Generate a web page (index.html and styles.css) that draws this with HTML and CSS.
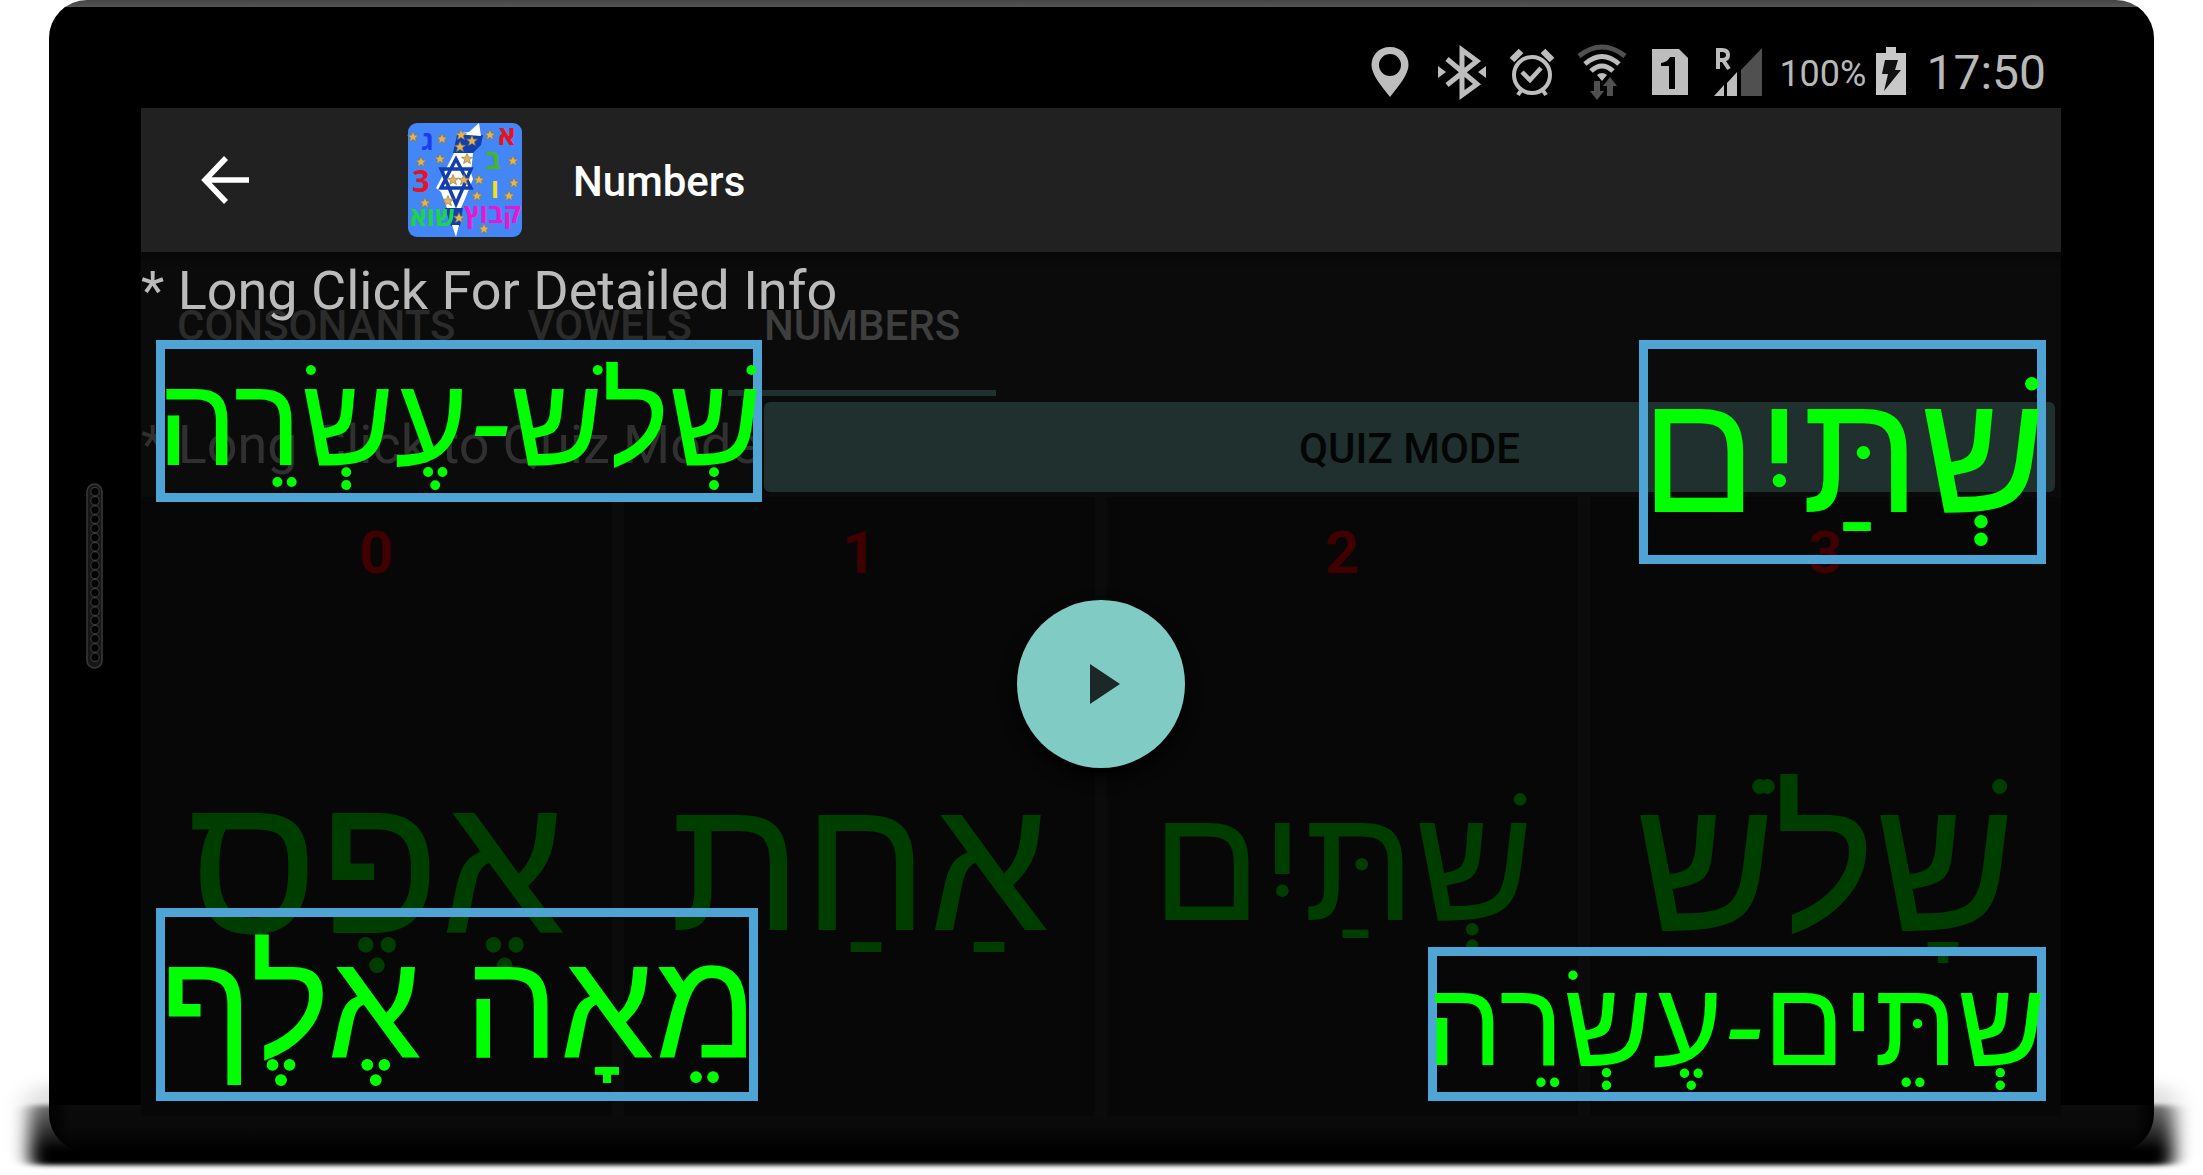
FILE: index.html
```html
<!DOCTYPE html>
<html lang="en">
<head>
<meta charset="utf-8">
<title>Numbers</title>
<link rel="stylesheet" href="styles.css">
</head>
<body>
<div class="stage">
  <svg class="floor-shadow" aria-hidden="true">
    <defs>
      <linearGradient id="fade" x1="0" y1="0" x2="0" y2="1"><stop offset="0" stop-opacity=".5"/><stop offset=".75" stop-opacity="1"/></linearGradient>
      <filter id="soft" x="-5%" y="-50%" width="110%" height="200%"><feGaussianBlur stdDeviation="9 2"/></filter>
      <filter id="faint" x="-5%" y="-50%" width="110%" height="200%"><feGaussianBlur stdDeviation="12 7"/></filter>
    </defs>
    <rect class="haze" filter="url(#faint)"/>
    <rect class="core" fill="url(#fade)" filter="url(#soft)"/>
  </svg>
  <div class="device">
    <svg class="speaker" viewBox="0 0 17 186" aria-hidden="true">
      <defs>
        <pattern id="holes" width="17" height="9.2" patternUnits="userSpaceOnUse" y="4">
          <circle cx="9" cy="4.6" r="4.2" fill="#000" stroke="#3c3c3c" stroke-width="1"/>
        </pattern>
      </defs>
      <rect x="1" y="1" width="15" height="184" rx="7.5" fill="#161616" stroke="#3a3a3a" stroke-width="1.5"/>
      <rect x="1" y="4" width="15" height="175" fill="url(#holes)"/>
    </svg>

    <div class="status-bar">
      <svg class="status-icon" width="48" height="54" viewBox="0 0 48 54" aria-label="Location"><path fill="#bdbdbd" fill-rule="evenodd" d="M24 2C13 2 5.500 10 5.500 20c0 9 9 20 18.500 32C33.500 40 42.500 29 42.500 20 42.500 10 35 2 24 2zm0 7a11 11 0 1 1 0 22 11 11 0 0 1 0-22z"/></svg>
      <svg class="status-icon" width="48" height="54" viewBox="0 0 48 54" aria-label="Bluetooth"><path fill="none" stroke="#bdbdbd" stroke-width="5" d="M9 14l30 25-15 11V5l15 11L9 40"/><path fill="#bdbdbd" d="M0 21l8 6-8 6zM48 21l-8 6 8 6z"/></svg>
      <svg class="status-icon" width="44" height="54" viewBox="0 0 44 54" aria-label="Alarm"><g fill="none" stroke="#bdbdbd"><circle cx="22" cy="30" r="18" stroke-width="4"/><path stroke-width="4.500" d="M12 27l8 8 11-12"/><path stroke-width="6.500" d="M2 15l9-9M42 15l-9-9"/><path stroke-width="4" d="M12 44l-4 6M32 44l4 6"/></g></svg>
      <svg class="status-icon" width="48" height="54" viewBox="0 0 48 54" aria-label="Wi-Fi"><g fill="none" stroke-width="5"><path stroke="#505050" d="M1 11Q24-7 47 11"/><path stroke="#bdbdbd" d="M7 19Q24 4 41 19M13 26Q24 16 35 26"/></g><path fill="#bdbdbd" d="M19 30q5-4 10 0l-5 6z"/><path fill="#505050" d="M16 36h6v10h4l-7 9-7-9h4zM29 51h6V41h4l-7-9-7 9h4z"/></svg>
      <svg class="status-icon" width="40" height="54" viewBox="0 0 40 54" aria-label="SIM 1"><path fill="#bdbdbd" d="M2 4h27l9 9v37H2z"/><path d="M11 18q7-1 9-6h5v32h-6V21h-8z"/></svg>
      <svg class="status-icon" width="48" height="54" viewBox="0 0 48 54" aria-label="Signal, roaming"><path fill="#505050" d="M27 51V25L48 3v48z"/><path fill="#bdbdbd" d="M0 51l10-11v11zM13 51V38l10-11v24z"/><path fill="none" stroke="#bdbdbd" stroke-width="4" d="M4 24V5h4q6 0 6 5t-6 5H4M9 15l6 9"/></svg>
      <span class="battery-level">100%</span>
      <svg class="battery-icon" width="30" height="54" viewBox="0 0 30 54" aria-label="Charging"><path fill="#c8c8c8" d="M0 8h10V2h10v6h10v42H0z"/><path fill="#111" d="M9 15h13l-3 10h6L8 46l4-17H6z"/></svg>
      <span class="clock">17:50</span>
    </div>

    <div class="screen">
      <header class="app-bar">
        <button class="back" type="button" aria-label="Back">
          <svg width="48" height="48" viewBox="0 0 48 48"><path fill="none" stroke="#fff" stroke-width="5.500" d="M25 2L4 24l21 22M4 24h44"/></svg>
        </button>
        <svg class="logo" viewBox="0 0 116 116" aria-hidden="true">
          <defs><path id="st" d="M0-5.500L1.600-1.800 5.500-1.700 2.400.8 3.500 4.600 0 2.400-3.500 4.600-2.400.8-5.500-1.700-1.600-1.800z" fill="#e0b558" stroke="#8a7142" stroke-width=".6"/></defs>
          <rect x="1" y="1" width="114" height="114" rx="9" fill="#4386f7"/>
          <path fill="#123faf" d="M50 13h26l-2 10-8 8H46zM38 86h18l-3 18h-9z"/>
          <path fill="#fff" d="M52 11l10-1 10-9 2 13-13-1zM47 31h19l-2 20 2 6-8 20-4 9H40l-6-16-5-4 8-15zM45 103h7l-3 12z"/>
          <g fill="none" stroke="#123faf" stroke-width="3.500"><path d="M49 37l15 29H34zM49 82L34 47h30z"/></g>
          <use href="#st" x="6" y="15"/><use href="#st" x="35" y="17"/><use href="#st" x="54" y="13"/><use href="#st" x="65" y="19"/><use href="#st" x="53" y="25"/><use href="#st" x="83" y="13"/><use href="#st" x="14" y="40"/><use href="#st" x="33" y="37"/><use href="#st" x="60" y="37"/><use href="#st" x="106" y="39"/><use href="#st" x="46" y="58"/><use href="#st" x="57" y="58"/><use href="#st" x="72" y="58"/><use href="#st" x="107" y="61"/><use href="#st" x="18" y="81"/><use href="#st" x="41" y="79"/><use href="#st" x="70" y="74"/><use href="#st" x="102" y="74"/><use href="#st" x="52" y="96"/><use href="#st" x="77" y="107"/>
          <g class="logo-letters">
            <text x="14" y="28" font-size="27" fill="#2038f0">ג</text>
            <text x="91" y="23" font-size="27" fill="#e8121c">א</text>
            <text x="78" y="47" font-size="27" fill="#48b51f">ב</text>
            <text x="5" y="70" font-size="31" fill="#e3132a">3</text>
            <text x="84" y="76" font-size="26" fill="#f2e21d">ו</text>
            <text x="3" y="104" font-size="26" fill="#18d743">שוא</text>
            <text x="57" y="101" font-size="27" fill="#ea16d0">קבוץ</text>
          </g>
        </svg>
        <h1 class="title">Numbers</h1>
      </header>

      <main class="content">
        <nav class="tabs">
          <a class="tab" href="#consonants">CONSONANTS</a>
          <a class="tab" href="#vowels">VOWELS</a>
          <a class="tab tab-active" href="#numbers">NUMBERS</a>
        </nav>
        <div class="quiz-row">
          <p class="quiz-hint">* Long Click to Quiz Mode</p>
          <button class="quiz-button" type="button">QUIZ MODE</button>
        </div>
        <ul class="cards">
          <li class="card"><span class="digit">0</span><span class="word word-xl" lang="he">אֶפֶס</span></li>
          <li class="card"><span class="digit">1</span><span class="word word-lg" lang="he">אַחַת</span></li>
          <li class="card"><span class="digit">2</span><span class="word word-md" lang="he">שְׁתַּיִם</span></li>
          <li class="card"><span class="digit">3</span><span class="word word-lg" lang="he">שָׁלֹשׁ</span></li>
        </ul>

        <div class="overlay">
          <p class="detail-hint">* Long Click For Detailed Info</p>
          <div class="tile tile-13" lang="he">שְׁלֹש<i>-</i>עֶשְׂרֵה</div>
          <div class="tile tile-2" lang="he">שְׁתַּיִם</div>
          <div class="tile tile-100k" lang="he">מֵאָה אֶלֶף</div>
          <div class="tile tile-12" lang="he">שְתֵּים<i>-</i>עֶשְׂרֵה</div>
          <button class="play" type="button" aria-label="Play">
            <svg width="30" height="40" viewBox="0 0 30 40"><path fill="#1c2827" d="M0 0l30 20L0 40z"/></svg>
          </button>
        </div>
      </main>
    </div>
  </div>
</div>
</body>
</html>
```
FILE: styles.css
```css
* { box-sizing: border-box; }

body {
  margin: 0;
  background: #fff;
  font-family: Roboto, "Liberation Sans", sans-serif;
}

p, h1, ul { margin: 0; padding: 0; }
button { border: 0; padding: 0; font-family: inherit; }

.stage {
  position: relative;
  display: flex;
  min-height: 100vh;
  padding: 0 49px 23px;
  overflow: hidden;
}

.floor-shadow {
  position: absolute;
  left: 0;
  bottom: 0;
  width: 100%;
  height: 120px;
}
.core { x: 30px; y: 50px; width: calc(100% - 60px); height: 60px; rx: 8px; }
.haze { x: 26px; y: 30px; width: calc(100% - 52px); height: 78px; rx: 20px; fill-opacity: .12; }

/* Phone body */
.device {
  position: relative;
  flex: 1;
  display: flex;
  flex-direction: column;
  padding: 36px 93px 36px 92px;
  border-radius: 38px;
  background:
    linear-gradient(#444, #555) top / 100% 7px no-repeat,
    linear-gradient(90deg, #000, transparent 20px calc(100% - 20px), #000) bottom / 100% 47px no-repeat,
    linear-gradient(#0b0b0b, #090909 50%, #000) bottom / 100% 47px no-repeat,
    #000;
  overflow: hidden;
}

.speaker {
  position: absolute;
  left: 37px;
  top: 50%;
  width: 17px;
  height: 186px;
  margin-top: -93px;
}

.status-bar {
  display: flex;
  justify-content: flex-end;
  align-items: center;
  height: 72px;
  padding-right: 15px;
  color: #b8b8b8;
}
.status-icon { margin-right: 24px; overflow: visible; }
.status-icon:nth-of-type(6) { margin-right: 17px; }
.battery-level { font-size: 36px; line-height: 72px; padding-top: 4px; }
.battery-icon { margin: 0 20px 0 10px; }
.clock { font-size: 48px; line-height: 72px; padding-top: 2px; }

/* App */
.screen { position: relative; flex: 1; display: flex; flex-direction: column; }

.app-bar {
  display: flex;
  align-items: center;
  height: 144px;
  padding-left: 60px;
  background: #212121;
}
.back { display: flex; background: none; }
.logo { width: 116px; height: 116px; margin: 0 50px 0 158px; }
.logo-letters { font-family: "Open Sans", "DejaVu Sans", sans-serif; font-weight: 700; }
.title { padding-top: 3px; color: #fff; font-size: 42px; font-weight: 500; line-height: 48px; }

.content {
  position: relative;
  flex: 1;
  display: flex;
  flex-direction: column;
  background: linear-gradient(#060606, #0b0b0b 16px);
}

.tabs { display: flex; height: 144px; }
.tab {
  height: 144px;
  padding: 0 36px;
  border-bottom: 6px solid transparent;
  color: #2b2b2b;
  font-size: 42px;
  font-weight: 500;
  line-height: 148px;
  text-decoration: none;
}
.tab-active { color: #3e3e3e; border-color: #20302f; }

.quiz-row { display: flex; align-items: center; height: 101px; padding-right: 6px; }
.quiz-hint { padding-bottom: 4px; color: #303030; font-size: 54px; line-height: 64px; white-space: nowrap; }
.quiz-button {
  flex: 1;
  height: 90px;
  margin-left: 4px;
  padding-top: 3px;
  border-radius: 6px;
  background: #20302f;
  color: #040606;
  font-size: 42px;
  font-weight: 500;
}

.cards {
  flex: 1;
  display: grid;
  grid-template-columns: repeat(4, 1fr);
  gap: 12px;
  list-style: none;
}
.card {
  display: flex;
  flex-direction: column;
  align-items: center;
  padding-top: 20px;
  background: #070707;
}
.digit { color: #400000; font-size: 60px; font-weight: 700; line-height: 72px; }

.word {
  margin: auto 0;
  padding-top: 22px;
  direction: rtl;
  color: #003e00;
  font-family: "Liberation Sans", sans-serif;
  line-height: 240px;
  white-space: nowrap;
}
.word-xl { font-size: 200px; }
.word-lg { font-size: 192px; }
.word-md { font-size: 162px; }

/* Floating layer over the dimmed page */
.overlay { position: absolute; inset: 0; }
.detail-hint { color: #bbb; font-size: 54px; line-height: 78px; }

.tile {
  position: absolute;
  direction: rtl;
  border: 9px solid #4fa4d6;
  color: #0f0;
  font-family: "Liberation Sans", sans-serif;
  text-indent: -9px;
  white-space: nowrap;
  overflow: clip;
  overflow-clip-margin: border-box;
}
.tile-13 { top: 88px; left: 15px; width: 606px; font-size: 127px; line-height: 144px; }
.tile-2 { top: 88px; right: 15px; width: 407px; font-size: 172px; line-height: 206px; }
.tile-100k { bottom: 15px; left: 15px; width: 602px; font-size: 151px; line-height: 175px; }
.tile-12 { bottom: 15px; right: 15px; width: 618px; font-size: 121px; line-height: 136px; }

.play {
  position: absolute;
  left: 50%;
  top: 348px;
  display: flex;
  align-items: center;
  justify-content: center;
  width: 168px;
  height: 168px;
  margin-left: -84px;
  padding-left: 8px;
  border-radius: 50%;
  background: #80cbc4;
  box-shadow: 0 8px 16px #000;
}
```
